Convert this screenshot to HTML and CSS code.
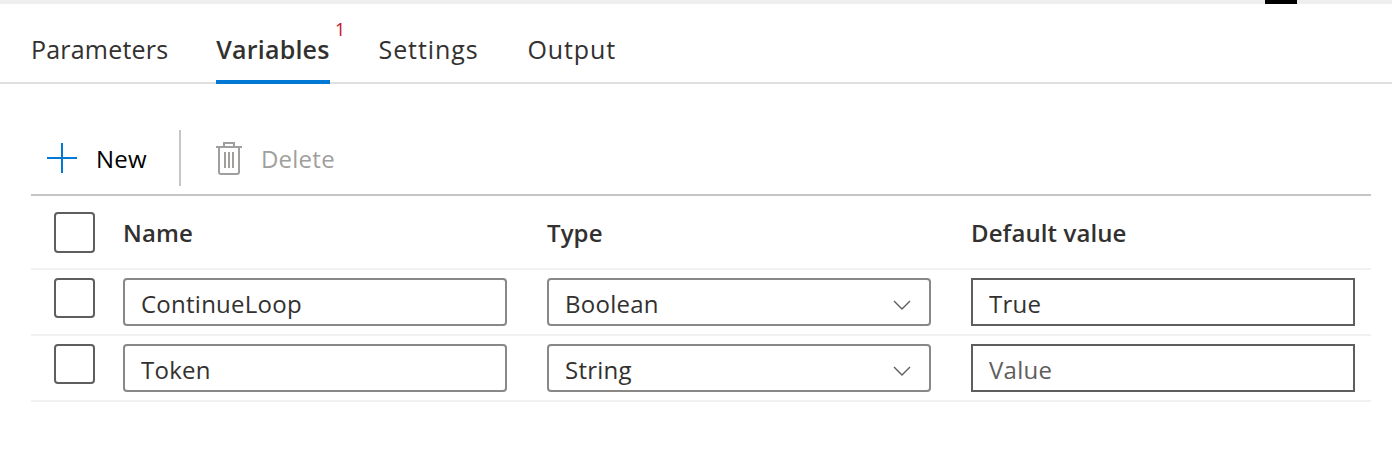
FILE: index.html
```html
<!DOCTYPE html>
<html lang="en">
  <head>
    <meta charset="UTF-8" />
    <title>Variables</title>
    <link rel="stylesheet" href="styles.css">
  </head>
  <body>
    <div class="topBar"><span class="topBlock"></span></div>
    <nav class="tabs">
      <ul>
        <li>Parameters</li>
        <li class="active">Variables<sup>1</sup></li>
        <li class="wide">Settings</li>
        <li class="wide">Output</li>
      </ul>
    </nav>
    <div class="content">
      <div class="toolbar">
        <button class="toolBtn newBtn">
          <svg width="32" height="32" viewBox="0 0 32 32"><path d="M16 1v30M1 16h30" fill="none" stroke="#0078d4" stroke-width="2"/></svg>
          New
        </button>
        <span class="toolSep"></span>
        <button class="toolBtn deleteBtn">
          <svg width="28" height="34" viewBox="0 0 28 34" fill="none" stroke="#a19f9d" stroke-width="2"><path d="M1 6h26M9 6V2h10v4M4 6v25a2 2 0 0 0 2 2h16a2 2 0 0 0 2-2V6M10 11v16M14 11v16M18 11v16"/></svg>
          Delete
        </button>
      </div>
      <div class="row headRow">
        <span class="check bigCheck"></span>
        <div class="cell">Name</div>
        <div class="cell">Type</div>
        <div class="cell">Default value</div>
      </div>
      <div class="row">
        <span class="check"></span>
        <input class="cell field" type="text" value="ContinueLoop" />
        <div class="cell field selectBox">Boolean
          <svg width="18" height="10" viewBox="0 0 18 10"><path d="M1 1l8 8 8-8" fill="none" stroke="#605e5c" stroke-width="1.4"/></svg>
        </div>
        <input class="cell field valueField" type="text" value="True" />
      </div>
      <div class="row">
        <span class="check"></span>
        <input class="cell field" type="text" value="Token" />
        <div class="cell field selectBox">String
          <svg width="18" height="10" viewBox="0 0 18 10"><path d="M1 1l8 8 8-8" fill="none" stroke="#605e5c" stroke-width="1.4"/></svg>
        </div>
        <input class="cell field valueField" type="text" placeholder="Value" />
      </div>
    </div>
  </body>
</html>
```

FILE: styles.css
```css
* {
  box-sizing: border-box;
}
body {
  margin: 0;
  background-color: #ffffff;
  color: #323130;
  font-family: "Open Sans", "Noto Sans", sans-serif;
  font-size: 24px;
  letter-spacing: 0.25px;
}
.topBar {
  height: 4px;
  background-color: #eeeeee;
  display: flex;
  justify-content: flex-end;
  padding-right: 95px;
}
.topBlock {
  width: 32px;
  background-color: #000000;
}
.tabs {
  height: 80px;
  border-bottom: 2px solid #e0e0e0;
  padding-left: 31px;
}
.tabs ul {
  display: flex;
  gap: 48px;
  list-style: none;
  margin: 0;
  padding: 0;
  height: 80px;
}
.tabs li {
  height: 80px;
  line-height: 90px;
  position: relative;
  font-size: 25px;
  letter-spacing: 0.2px;
}
.tabs li.wide {
  margin-left: 1px;
  letter-spacing: 0.9px;
}
.tabs li.active {
  font-weight: 600;
  border-bottom: 4px solid #0078d4;
}
.tabs sup {
  position: absolute;
  top: 13px;
  right: -16px;
  line-height: 24px;
  font-size: 18px;
  font-weight: 400;
  color: #c50f1f;
}
.content {
  padding: 46px 21px 0 31px;
}
.toolbar {
  display: flex;
  align-items: flex-start;
  height: 66px;
  border-bottom: 2px solid #c8c6c4;
}
.toolBtn {
  display: flex;
  align-items: center;
  border: 0;
  background: none;
  padding: 0;
  font: inherit;
  letter-spacing: inherit;
  height: 56px;
}
.newBtn {
  color: #000000;
  gap: 18px;
  padding: 0 32px 0 15px;
}
.deleteBtn {
  color: #a19f9d;
  gap: 18px;
  padding-left: 34px;
}
.toolSep {
  width: 2px;
  height: 56px;
  background-color: #c8c6c4;
}
.row {
  display: flex;
  align-items: flex-start;
  gap: 40px;
  padding: 8px 16px 8px 23px;
  height: 66px;
  border-bottom: 2px solid #f3f2f1;
}
.headRow {
  height: 74px;
  padding-top: 16px;
  padding-bottom: 16px;
  align-items: center;
  font-weight: 600;
  letter-spacing: 0.1px;
}
.check {
  display: block;
  flex: none;
  width: 41px;
  height: 40px;
  margin-right: -12px;
  border: 2px solid #605e5c;
  border-radius: 4px;
}
.bigCheck {
  height: 41px;
}
.cell {
  flex: none;
  width: 384px;
}
.field {
  height: 48px;
  border: 2px solid #8a8886;
  border-radius: 4px;
  padding: 2px 16px 0;
  font: inherit;
  letter-spacing: inherit;
  color: #323130;
  background-color: #ffffff;
  outline: none;
}
.selectBox {
  display: flex;
  align-items: center;
  justify-content: space-between;
  padding-right: 18px;
}
.selectBox svg {
  margin-top: 4px;
}
.valueField {
  border-color: #605e5c;
  border-radius: 0;
}
.valueField::placeholder {
  color: #605e5c;
  opacity: 1;
}
```
